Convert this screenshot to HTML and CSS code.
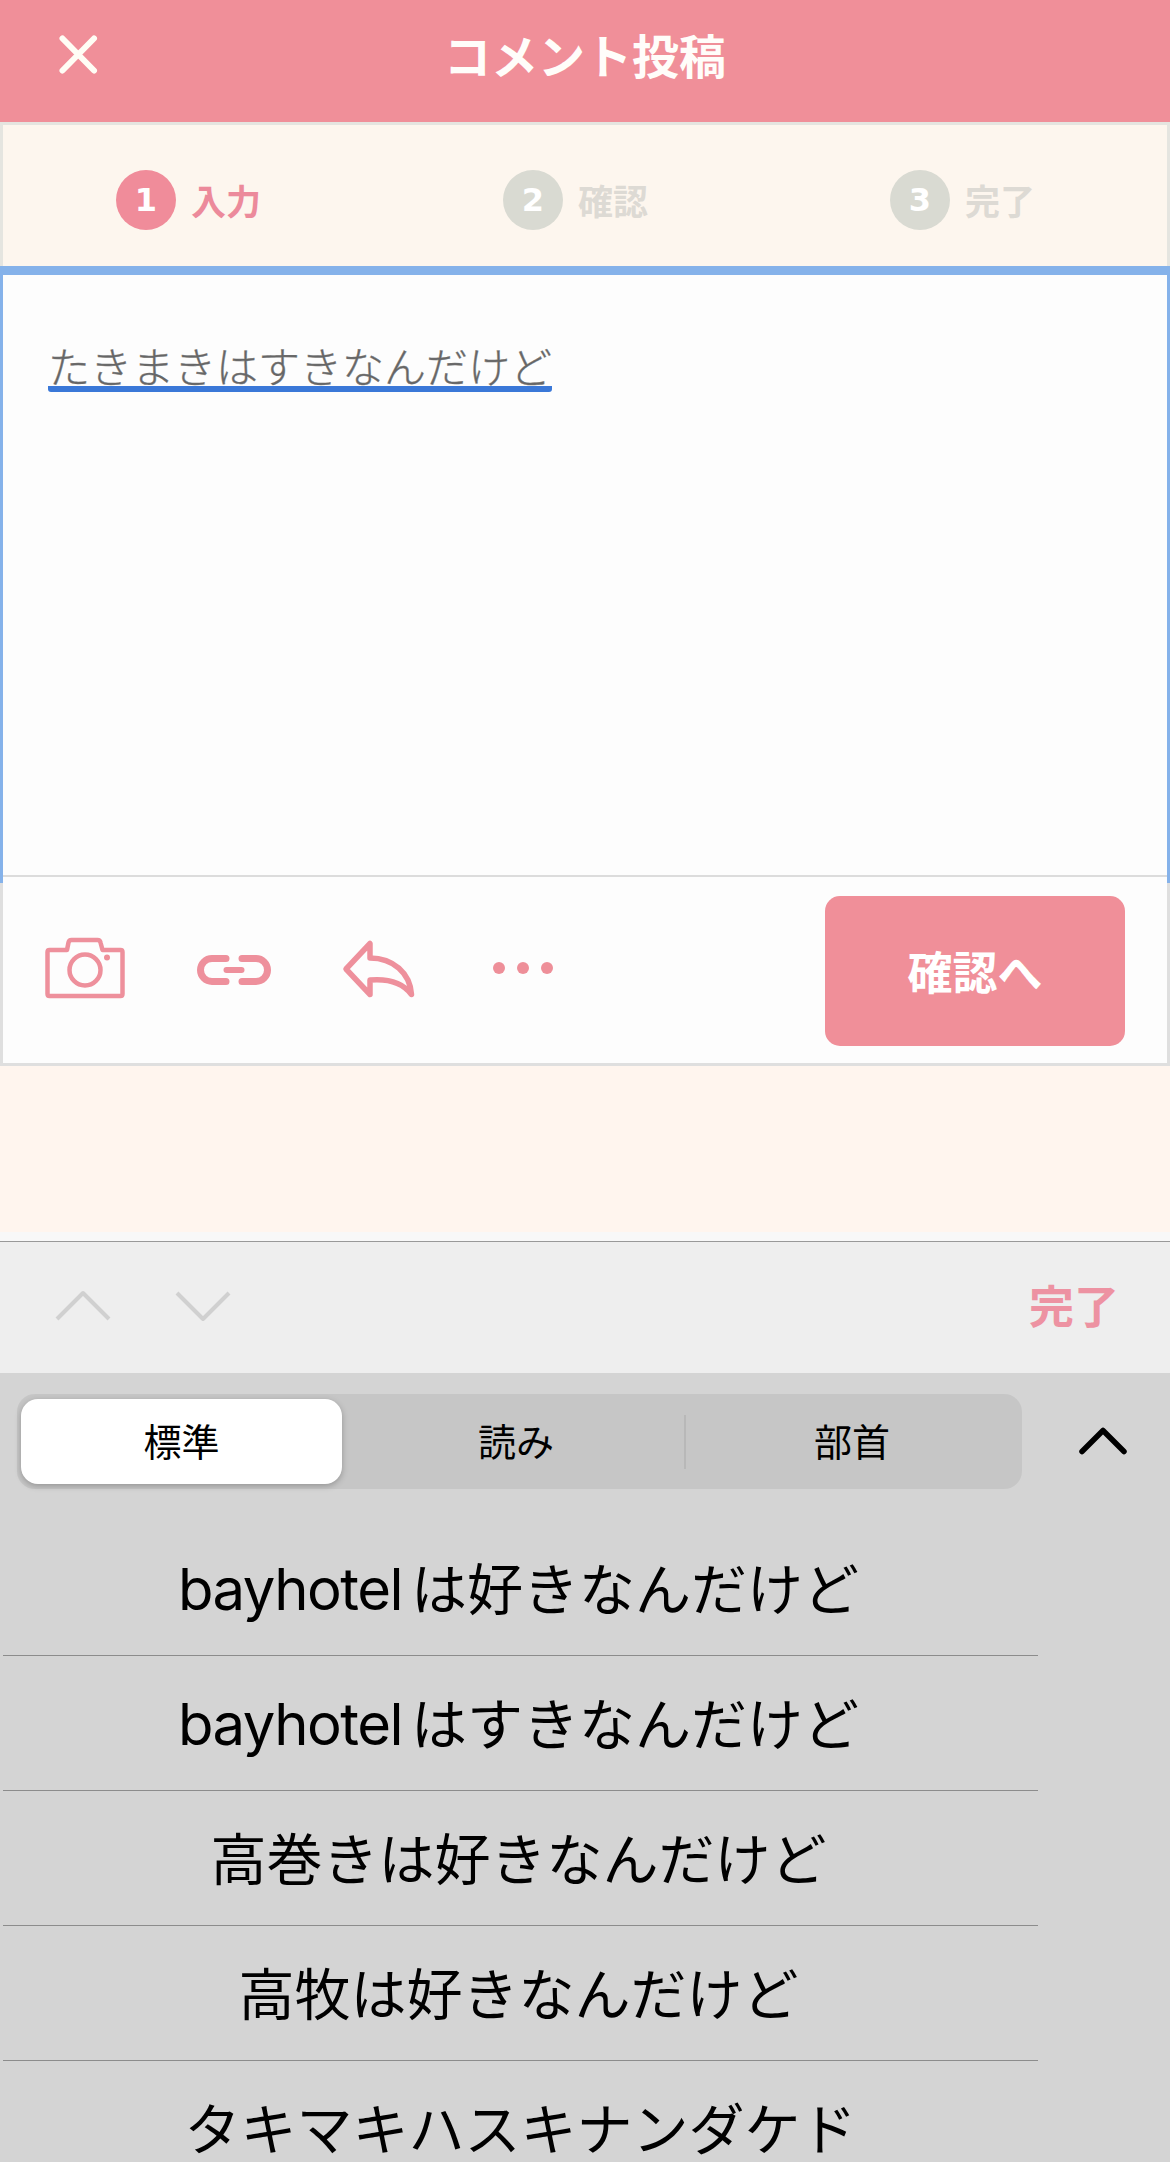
FILE: index.html
```html
<!DOCTYPE html>
<html lang="ja">
<head>
  <meta charset="UTF-8">
  <meta name="viewport" content="width=device-width, initial-scale=1.0">
  <title>コメント投稿</title>
  <link rel="stylesheet" href="styles.css">
</head>
<body>
  <header class="header">
    <svg class="close" width="41" height="41" viewBox="0 0 41 41"><path d="M4.500 4.500L36 36.500M36 4.500L4.500 36.500"/></svg>
    <h1>コメント投稿</h1>
  </header>

  <div class="steps">
    <div class="step active"><span class="num">1</span>入力</div>
    <div class="step"><span class="num">2</span>確認</div>
    <div class="step"><span class="num">3</span>完了</div>
  </div>

  <div class="editor">
    <div class="text-area">
      <span class="composing">たきまきはすきなんだけど</span>
    </div>
  </div>

  <div class="toolbar">
    <!-- camera -->
    <svg class="icon" width="82" height="62" viewBox="0 0 82 62">
      <path stroke-width="4.5" d="M5.500 13H23L24.500 5.500Q25 3 27.500 3H53.500Q56 3 56.500 5.500L58.500 13H76.500Q78.500 13 78.500 15V57Q78.500 59 76.500 59H5.500Q3.500 59 3.500 57V15Q3.500 13 5.500 13Z"/>
      <circle cx="41" cy="33" r="15.500" stroke-width="4.500"/>
      <circle class="fill" cx="63" cy="20.500" r="3"/>
    </svg>
    <!-- link -->
    <svg class="icon link" width="76" height="32" viewBox="0 0 76 32">
      <path stroke-width="7" d="M29 4.500H15A11.500 11.500 0 0 0 15 27.500H29M45 4.500H59A11.500 11.500 0 0 1 59 27.500H45"/>
      <path stroke-width="6" d="M29.500 16H44.500"/>
    </svg>
    <!-- reply -->
    <svg class="icon reply" width="74" height="60" viewBox="0 0 74 60">
      <path stroke-width="5.500" d="M4 30L28 4.500V19C51 19 68 34 69.500 55.500C61 44 46 39.500 28 41V55.500Z"/>
    </svg>
    <svg class="icon more" width="62" height="14" viewBox="0 0 62 14">
      <g class="fill"><circle cx="7" cy="7" r="6"/><circle cx="31" cy="7" r="6"/><circle cx="55" cy="7" r="6"/></g>
    </svg>
    <button class="confirm">確認へ</button>
  </div>

  <div class="spacer"></div>

  <div class="accessory">
    <svg class="arrow" width="56" height="34" viewBox="0 0 56 34"><path d="M2 31L28 5L54 31"/></svg>
    <svg class="arrow next" width="56" height="34" viewBox="0 0 56 34"><path d="M2 5L28 31L54 5"/></svg>
    <span class="done">完了</span>
  </div>

  <div class="keyboard">
    <div class="tabs-row">
      <div class="tabs">
        <div class="tab selected">標準</div>
        <div class="tab middle">読み</div>
        <div class="tab">部首</div>
      </div>
      <svg class="collapse" width="52" height="30" viewBox="0 0 52 30"><path d="M5 24.500L26 3.500L47 24.500"/></svg>
    </div>
    <ul class="candidates">
      <li><span class="latin">bayhotel</span>は好きなんだけど</li>
      <li><span class="latin">bayhotel</span>はすきなんだけど</li>
      <li>高巻きは好きなんだけど</li>
      <li>高牧は好きなんだけど</li>
      <li>タキマキハスキナンダケド</li>
    </ul>
  </div>
</body>
</html>
```
FILE: styles.css
```css
* {
  box-sizing: border-box;
}
body {
  margin: 0;
  height: 2162px;
  overflow: hidden;
  background: #fff5ee;
  font-family: "Noto Sans CJK JP", sans-serif;
  display: flex;
  flex-direction: column;
}
svg {
  display: block;
  flex: none;
  fill: none;
  stroke-linecap: round;
  stroke-linejoin: round;
}
.header {
  height: 122px;
  flex: none;
  background: #f08f99;
  color: #fffdfa;
  display: grid;
  grid-template-columns: 140px 1fr 140px;
  align-items: center;
  padding-bottom: 13px;
}
.close {
  margin-left: 58px;
  stroke: #fffdf5;
  stroke-width: 6;
}
.header h1 {
  margin: 0 0 2px;
  text-align: center;
  font-size: 47px;
  line-height: 60px;
  font-weight: bold;
}
.steps {
  height: 144px;
  flex: none;
  display: flex;
  border: 3px solid #e5e5e0;
  border-bottom: none;
  padding: 8px 0 0 113px;
  align-items: center;
  background: #fdf6ee;
}
.step {
  width: 387px;
  flex: none;
  display: flex;
  align-items: center;
  font-size: 35px;
  line-height: 50px;
  font-weight: bold;
  color: #dddad4;
}
.step:last-child {
  width: auto;
}
.num {
  width: 60px;
  height: 60px;
  margin-right: 15px;
  border-radius: 50%;
  background: #d9dad2;
  color: #fff;
  font: bold 32px/60px "DejaVu Sans", sans-serif;
  text-align: center;
}
.step.active {
  color: #ec8a9b;
}
.active .num {
  background: #f08c9a;
}
.editor {
  height: 617px;
  flex: none;
  background: #fdfdfd;
  border: 3px solid #85b2ea;
  border-top-width: 9px;
  border-bottom: none;
}
.text-area {
  height: 602px;
  padding: 63px 45px;
  border-bottom: 2px solid #dcdcdc;
}
.composing {
  display: inline-block;
  height: 54px;
  font-size: 42px;
  line-height: 53px;
  font-weight: 300;
  color: #666;
  -webkit-text-stroke: 0.4px #777;
  border-bottom: 6px solid #3a78d8;
  border-radius: 3px;
}
.toolbar {
  height: 183px;
  flex: none;
  display: flex;
  align-items: center;
  background: #fdfdfd;
  border: 3px solid #dfdfdf;
  border-top: none;
  padding: 0 42px 6px 41px;
}
.icon {
  margin-bottom: 4px;
  stroke: #ee909c;
}
.icon .fill {
  fill: #ee8f99;
  stroke: none;
}
.link {
  margin: 0 0 0 71px;
}
.reply {
  margin-left: 69px;
  margin-bottom: 2px;
}
.more {
  margin-left: 76px;
}
.confirm {
  width: 300px;
  height: 150px;
  margin: 2px 0 0 auto;
  border: none;
  border-radius: 15px;
  background: #f08f99;
  color: #fff;
  font: bold 45px/60px "Noto Sans CJK JP", sans-serif;
}
.spacer {
  height: 175px;
  flex: none;
  border-bottom: 9px solid #f8f8f8;
}
.accessory {
  height: 132px;
  flex: none;
  display: flex;
  align-items: center;
  background: #eee;
  border-top: 1px solid #999;
  padding: 0 51px 5px 55px;
}
.arrow {
  stroke: #d0d0d0;
  stroke-width: 4;
  stroke-linecap: butt;
}
.next {
  margin-left: 64px;
}
.done {
  margin-left: auto;
  font-size: 45px;
  line-height: 60px;
  font-weight: bold;
  color: #ed92a2;
}
.keyboard {
  flex: 1;
  background: #d4d4d4;
}
.tabs-row {
  display: flex;
  align-items: center;
  padding: 21px 0 32px 17px;
}
.tabs {
  width: 1005px;
  height: 95px;
  display: flex;
  align-items: center;
  padding: 0 4px;
  border-radius: 18px;
  background: #c6c6c6;
}
.tab {
  flex: 1;
  height: 54px;
  font-size: 38px;
  line-height: 50px;
  text-align: center;
  color: #000;
}
.tab.middle {
  flex: none;
  width: 338px;
  border-right: 2px solid #b8b8b8;
}
.tab.selected {
  flex: none;
  width: 321px;
  height: 85px;
  line-height: 81px;
  margin-right: 6px;
  border-radius: 17px;
  background: #fff;
  box-shadow: 0 2px 6px rgba(0, 0, 0, 0.25);
}
.collapse {
  margin-left: 55px;
  stroke: #000;
  stroke-width: 5.5;
}
.candidates {
  list-style: none;
  margin: 0 0 0 3px;
  padding: 0;
  width: 1035px;
}
.candidates li {
  height: 135px;
  border-bottom: 1px solid #8c8c8c;
  padding-right: 4px;
  font-size: 56px;
  line-height: 129px;
  text-align: center;
  white-space: nowrap;
  color: #000;
}
/* last row runs past the bottom of the screen */
.candidates li:last-child {
  height: 101px;
  padding-right: 0;
  border-bottom: none;
}
.latin {
  font-family: Inter, sans-serif;
  font-size: 58px;
  line-height: 1;
  letter-spacing: -1.5px;
  margin-right: 9px;
}
```
